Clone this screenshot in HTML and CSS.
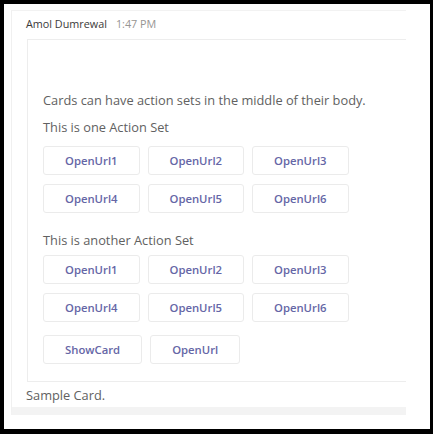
FILE: index.html
```html
<!DOCTYPE html>
<html>
<head>
<meta charset="utf-8">
<link rel="stylesheet" href="styles.css">
</head>
<body>
<div class="frame">
  <div class="message">
    <div class="header"><span class="author">Amol Dumrewal</span><span class="time">1:47 PM</span></div>
    <div class="card">
      <p class="text first">Cards can have action sets in the middle of their body.</p>
      <p class="text">This is one Action Set</p>
      <div class="actions set1">
        <div class="row"><span class="btn">OpenUrl1</span><span class="btn">OpenUrl2</span><span class="btn">OpenUrl3</span></div>
        <div class="row"><span class="btn">OpenUrl4</span><span class="btn">OpenUrl5</span><span class="btn">OpenUrl6</span></div>
      </div>
      <p class="text another">This is another Action Set</p>
      <div class="actions set2">
        <div class="row"><span class="btn">OpenUrl1</span><span class="btn">OpenUrl2</span><span class="btn">OpenUrl3</span></div>
        <div class="row"><span class="btn">OpenUrl4</span><span class="btn">OpenUrl5</span><span class="btn">OpenUrl6</span></div>
      </div>
      <div class="actions set3">
        <div class="row"><span class="btn">ShowCard</span><span class="btn">OpenUrl</span></div>
      </div>
    </div>
    <div class="summary">Sample Card.</div>
  </div>
</div>
</body>
</html>
```

FILE: styles.css
```css
html, body {
  margin: 0;
  padding: 0;
  background: #fff;
}
.frame {
  box-sizing: border-box;
  width: 433px;
  height: 434px;
  border-style: solid;
  border-color: #000;
  border-width: 4px 3px 5px 4px;
  padding: 6px 0 0 7px;
  background: #fff;
  font-family: "Open Sans", "Noto Sans", sans-serif;
  overflow: hidden;
}
.message {
  box-sizing: border-box;
  width: 395px;
  height: 405px;
  border-left: 1px solid #f0f0f0;
  border-top: 1px solid #f2f2f2;
  border-bottom: 8px solid #f3f3f3;
  overflow: hidden;
}
.header {
  padding: 5px 0 0 14px;
  height: 16px;
  line-height: 16px;
  font-size: 10.8px;
  display: flex;
  gap: 9px;
}
.author {
  color: #3b3a39;
}
.time {
  color: #979593;
}
.card {
  box-sizing: border-box;
  width: 420px;
  margin: 7px 0 0 15px;
  border: 1px solid #ededed;
  padding: 52px 0 17px 15px;
}
.text {
  margin: 11px 0 0;
  font-size: 12.8px;
  line-height: 16px;
  color: #616161;
}
.text.first {
  margin-top: 0;
}
.text.another {
  margin-top: 19px;
}
.actions {
  display: flex;
  flex-direction: column;
  gap: 9px;
}
.set1 {
  margin-top: 11px;
}
.set2 {
  margin-top: 7px;
}
.set3 {
  margin-top: 13px;
}
.row {
  display: flex;
  gap: 8px;
}
.btn {
  box-sizing: border-box;
  height: 29px;
  line-height: 27px;
  padding: 0 21px;
  border: 1px solid #ebebeb;
  border-radius: 3px;
  font-size: 11.3px;
  font-weight: 600;
  color: #6566a6;
  background: #fff;
}
.summary {
  margin: 5px 0 0 14px;
  font-size: 12.8px;
  line-height: 16px;
  color: #616161;
}
```
